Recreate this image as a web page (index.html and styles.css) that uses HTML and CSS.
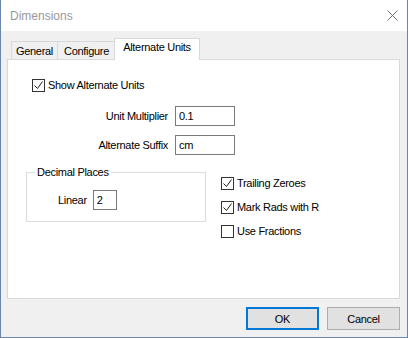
FILE: index.html
```html
<!DOCTYPE html>
<html lang="en">

<head>
    <meta charset="UTF-8">
    <meta name="viewport" content="width=device-width, initial-scale=1.0">
    <title>Dimensions</title>
    <link rel="stylesheet" href="styles.css">
</head>

<body>
    <div class="window">
        <div class="titlebar">
            <span class="title">Dimensions</span>
            <svg class="close" width="11" height="11" viewBox="0 0 11 11">
                <path d="M0.5 0.5 L10.5 10.5 M10.5 0.5 L0.5 10.5" stroke="#707070" stroke-width="1" fill="none" />
            </svg>
        </div>
        <div class="content">
            <div class="tabs">
                <div class="tab tab-general">General</div>
                <div class="tab tab-configure">Configure</div>
                <div class="tab tab-alt active">Alternate Units</div>
            </div>
            <div class="panel">
                <label class="check show-alt">
                    <span class="box">
                        <svg width="11" height="11" viewBox="0 0 11 11"><path d="M1.5 5.5 L4.5 8.5 L9.5 1.5" stroke="#222" stroke-width="1" fill="none" /></svg>
                    </span>
                    Show Alternate Units
                </label>
                <div class="fields">
                    <label for="multiplier">Unit Multiplier</label>
                    <input type="text" id="multiplier" value="0.1">
                    <label for="suffix">Alternate Suffix</label>
                    <input type="text" id="suffix" value="cm">
                </div>
                <div class="lower">
                    <fieldset class="group">
                        <legend>Decimal Places</legend>
                        <div class="linear">
                            <label for="linear">Linear</label>
                            <input type="text" id="linear" value="2">
                        </div>
                    </fieldset>
                    <div class="options">
                        <label class="check">
                            <span class="box">
                                <svg width="11" height="11" viewBox="0 0 11 11"><path d="M1.5 5.5 L4.5 8.5 L9.5 1.5" stroke="#222" stroke-width="1" fill="none" /></svg>
                            </span>
                            Trailing Zeroes
                        </label>
                        <label class="check">
                            <span class="box">
                                <svg width="11" height="11" viewBox="0 0 11 11"><path d="M1.5 5.5 L4.5 8.5 L9.5 1.5" stroke="#222" stroke-width="1" fill="none" /></svg>
                            </span>
                            Mark Rads with R
                        </label>
                        <label class="check">
                            <span class="box"></span>
                            Use Fractions
                        </label>
                    </div>
                </div>
            </div>
        </div>
        <div class="buttons">
            <button class="default">OK</button>
            <button>Cancel</button>
        </div>
    </div>
</body>

</html>
```

FILE: styles.css
```css
* {
    margin: 0;
    padding: 0;
    box-sizing: border-box;
}

body {
    font-family: "Liberation Sans", Arial, sans-serif;
    font-size: 11px;
    letter-spacing: -0.3px;
    color: #000;
    background-color: #fff;
}

.window {
    width: 408px;
    height: 338px;
    display: flex;
    flex-direction: column;
    border: 1px solid #6b86ab;
    border-top: none;
    background-color: #f0f0f0;
}

.titlebar {
    height: 31px;
    display: flex;
    align-items: center;
    padding: 0 9px 0 9px;
    background-color: #fff;
}

.title {
    font-size: 12px;
    letter-spacing: 0;
    color: #999;
}

.close {
    margin-left: auto;
}

.content {
    padding: 7px 7px 0 6px;
}

.tabs {
    display: flex;
    align-items: flex-end;
    height: 21px;
    padding-left: 4px;
}

.tab {
    height: 18px;
    line-height: 16px;
    padding-top: 1px;
    text-align: center;
    border: 1px solid #d9d9d9;
    border-bottom: none;
    background-color: #f0f0f0;
}

.tab-general {
    width: 47px;
}

.tab-configure {
    width: 59px;
    margin-left: -1px;
}

.tab-alt {
    width: 86px;
    margin-left: -2px;
}

.tab.active {
    position: relative;
    z-index: 1;
    height: 22px;
    margin-bottom: -1px;
    padding-top: 0;
    background-color: #fff;
}

.panel {
    height: 240px;
    border: 1px solid #d9d9d9;
    background-color: #fff;
}

.check {
    display: flex;
    align-items: center;
    height: 13px;
    line-height: 13px;
}

.box {
    width: 13px;
    height: 13px;
    margin-right: 3px;
    border: 1px solid #333;
    background-color: #fff;
    display: flex;
    align-items: center;
    justify-content: center;
}

.show-alt {
    margin: 19px 0 0 24px;
}

.fields {
    display: grid;
    grid-template-columns: 160px 60px;
    column-gap: 7px;
    row-gap: 9px;
    align-items: center;
    margin-top: 14px;
}

.fields label {
    text-align: right;
}

input {
    height: 20px;
    border: 1px solid #7a7a7a;
    padding: 0 3px;
    font-family: "Liberation Sans", Arial, sans-serif;
    font-size: 11px;
    letter-spacing: -0.3px;
    color: #000;
    outline: none;
}

.lower {
    display: flex;
    align-items: flex-start;
    margin-top: 11px;
}

.group {
    width: 180px;
    margin-left: 18px;
    border: 1px solid #dcdcdc;
    padding: 0 0 11px 0;
}

.group legend {
    margin-left: 8px;
    padding: 0 2px;
    line-height: 13px;
}

.linear {
    display: flex;
    align-items: center;
    margin: 11px 0 0 31px;
}

.linear label {
    margin-right: 6px;
}

.linear input {
    width: 24px;
}

.options {
    display: flex;
    flex-direction: column;
    gap: 11px;
    margin: 11px 0 0 15px;
}

.buttons {
    display: flex;
    justify-content: flex-end;
    gap: 8px;
    padding: 8px 7px 0 0;
}

button {
    width: 73px;
    height: 23px;
    font-family: "Liberation Sans", Arial, sans-serif;
    font-size: 11px;
    letter-spacing: -0.3px;
    color: #000;
    background-color: #e1e1e1;
    border: 1px solid #adadad;
}

button.default {
    border: 2px solid #0078d7;
}
```
